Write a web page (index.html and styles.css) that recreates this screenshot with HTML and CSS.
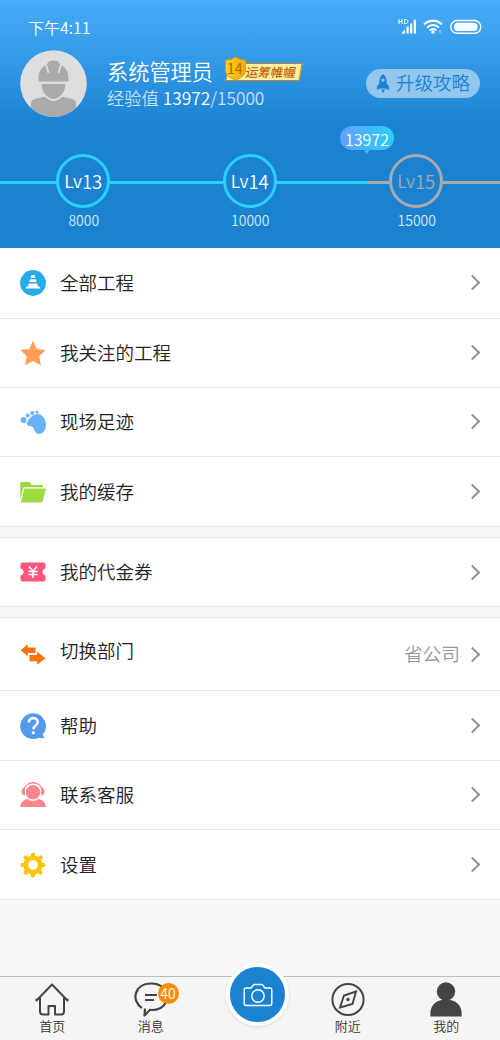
FILE: index.html
```html
<!DOCTYPE html>
<html lang="zh-CN">
<head>
<meta charset="utf-8">
<title>我的</title>
<link rel="stylesheet" href="styles.css">
</head>
<body>
<div class="app">
  <header class="hero">
    <div class="status">
      <span class="time">下午4:11</span>
      <svg class="status-icons" width="86" height="18" viewBox="0 0 86 18" fill="none" stroke="#fff">
        <path d="M1 1v5M4 1v5M1 3.500h3M6.500 1.500h1.300c2.700 0 2.700 4 0 4h-1.300z" stroke-width="1"/>
        <path d="M3 15.500h4v-4zM8.500 8.500h2.200v7H8.500zM12 5.500h2.200v10H12zM15.700 1.700h2.300v13.800h-2.300z" fill="#fff" stroke="none"/>
        <path d="M26 6.300q9-7.500 18 0M29 9.500q6-5 12 0M31.600 12.500q3.400-2.800 6.800 0" stroke-width="2.100"/>
        <circle cx="35" cy="14.200" r="1.600" fill="#fff" stroke="none"/>
        <path d="M42 12v3.500" opacity=".6"/>
        <rect x="52.800" y="2.500" width="30" height="12.800" rx="6.400" stroke-width="1.400"/>
        <rect x="56" y="4.800" width="23.500" height="8.200" rx="3.500" fill="#fff" stroke="none"/>
      </svg>
    </div>
    <div class="profile">
      <svg class="avatar" width="67" height="67" viewBox="0 0 67 67">
        <defs><clipPath id="face"><circle cx="33.500" cy="33.500" r="33.300"/></clipPath></defs>
        <circle cx="33.500" cy="33.500" r="33.300" fill="#dedede"/>
        <g fill="#aaa" clip-path="url(#face)">
          <path d="M11 67V53q0-3 4-4l10-2.500q8 8 17 0l10 2.500q4 1 4 4v14z"/>
          <path d="M20.500 33h26c0 8-4 13-8 15.500q-5 3-10 0c-4-2.500-8-7.500-8-15.500z" stroke="#dedede" stroke-width="2"/>
          <path d="M18.500 31.500V28c0-7 3.500-11.500 8.500-13.500q1-4 6.500-4t6.500 4c5 2 8.500 6.500 8.500 13.500v3.500z"/>
          <path d="M26 14.500l2.500 8.500M41 14.500L38.500 23" stroke="#dedede" stroke-width="1.800"/>
        </g>
      </svg>
      <div class="identity">
        <div class="name-line"><span class="name">系统管理员</span>
          <span class="medal">
            <svg width="23" height="25" viewBox="0 0 23 25"><defs><linearGradient id="gold"><stop stop-color="#ffd11e"/><stop offset="1" stop-color="#f4a900"/></linearGradient></defs><path d="M11.500 1q4 3.500 10 3v11q-1 6-10 9-9-3-10-9V4q6 .5 10-3z" fill="url(#gold)" stroke="#e19b0a"/></svg>
            <b class="rank">14</b><span class="title"><i>运筹帷幄</i></span>
          </span>
        </div>
        <div class="exp">经验值 <strong>13972</strong>/15000</div>
      </div>
      <div class="guide">
        <svg width="14" height="21" viewBox="0 0 14 21" fill="#1b82d2"><path fill-rule="evenodd" d="M7 1c3 2.300 4 6 3.700 9.500l2.300 3V17l-3-1.500H4L1 17v-3.500l2.300-3C3 7 4 3.300 7 1zm0 4.500a1.700 1.700 0 1 0 0 3.400 1.700 1.700 0 0 0 0-3.400z"/><path d="M5 16.500h4l-2 3.700z"/></svg>
        <span>升级攻略</span>
      </div>
    </div>
    <div class="levels">
      <div class="track"></div>
      <div class="level"><div class="ring">Lv<b>13</b></div><span>8000</span></div>
      <div class="level"><div class="ring">Lv<b>14</b></div><span>10000</span></div>
      <div class="level locked"><div class="ring">Lv<b>15</b></div><span>15000</span></div>
      <div class="bubble">13972</div>
    </div>
  </header>

  <main>
    <section class="group">
      <div class="row">
        <svg class="icon" viewBox="0 0 26 26"><circle cx="13" cy="13" r="12.900" fill="#27abeb"/><path d="M11.500 5h3l.9 3h-4.800zM10.200 9.300h5.600l.9 2.700H9.300zM8.900 13.500h8.200l1.100 3.200h1.900v1.800H5.900v-1.800h1.900z" fill="#fff"/></svg>
        <span class="label">全部工程</span><i class="arrow"></i>
      </div>
      <div class="row">
        <svg class="icon" viewBox="0 0 26 26"><path d="M13 .8l3.800 8.200 8.900 1.100-6.500 6.200 1.700 8.900-7.900-4.300-7.900 4.300 1.700-8.900-6.500-6.200L9.200 9z" fill="#ff9f55"/></svg>
        <span class="label">我关注的工程</span><i class="arrow"></i>
      </div>
      <div class="row">
        <svg class="icon" viewBox="0 0 26 26" fill="#68b2fa"><circle cx="3.500" cy="11" r="3"/><circle cx="7.700" cy="6.500" r="2"/><circle cx="12.200" cy="4" r="2"/><circle cx="17" cy="3" r="1.500"/><path d="M7 14c1-4 6-9 11-9 5 .5 8 6 8 11 0 6-4 9-7 9-5 0-4-6-7-7.500-2-1-5.500 0-5-3.500z"/></svg>
        <span class="label">现场足迹</span><i class="arrow"></i>
      </div>
      <div class="row">
        <svg class="icon" viewBox="0 0 26 26" fill="#9bdd40"><path d="M.2 21V4q0-1 1-1h8q1 0 1.400 1l1 2H22q1 0 1 1v1.200H4.500q-1 0-1.300 1z"/><path d="M5 9.600h20q1 0 .8 1l-3.300 12q-.3 1-1.300 1H2q-1.200 0-.9-1L4 10.500q.2-.9 1-.9z"/></svg>
        <span class="label">我的缓存</span><i class="arrow"></i>
      </div>
    </section>
    <section class="group">
      <div class="row">
        <svg class="icon" viewBox="0 0 26 26"><path d="M2.500 3.500h21q2 0 2 2v4q-3 .5-3 3.500t3 3.500v4q0 2-2 2h-21q-2 0-2-2v-4q3-.5 3-3.500t-3-3.500v-4q0-2 2-2z" fill="#ff567e"/><path d="M9 7.500l4 4.500 4-4.500M8.500 12.500h9M8.500 15.500h9M13 12v7" fill="none" stroke="#fff" stroke-width="1.500"/></svg>
        <span class="label">我的代金券</span><i class="arrow"></i>
      </div>
    </section>
    <section class="group">
      <div class="row switch">
        <svg class="icon" viewBox="0 0 26 26" fill="#ff730f"><path d="M.7 9.300L7.700 3.300v3.200H15.500v5.500H7.700v3.300zM9.500 14H17v-3.300l8.600 6.500-8.600 6.500v-3.500H9.500z"/></svg>
        <span class="label">切换部门</span><span class="value">省公司</span><i class="arrow"></i>
      </div>
      <div class="row">
        <svg class="icon" viewBox="0 0 26 26"><path d="M13 .3a12.800 12.800 0 0 1 9.700 21.200q.6 2 1.800 3.800-3 .1-5-.9A12.900 12.900 0 1 1 13 .3z" fill="#5399ed"/><path d="M8.800 9.500c0-6 9.200-5.500 8.900-.3-.2 3.500-4.300 3.200-4.300 7" fill="none" stroke="#fff" stroke-width="2.600"/><path d="M11.900 18.500h2.900v2.600h-2.900z" fill="#fff"/></svg>
        <span class="label">帮助</span><i class="arrow"></i>
      </div>
      <div class="row">
        <svg class="icon" viewBox="0 0 26 26" fill="#ff8591"><circle cx="13" cy="10.300" r="7.200"/><path d="M3.500 8.500C6-1.800 20-1.800 22.500 8.500" fill="none" stroke="#ff8591" stroke-width="1.400"/><path d="M5 5.500v8q-3.500-.5-3.500-4T5 5.500zM21 5.500v8q3.500-.5 3.500-4t-3.500-4zM.2 25q0-6 7-8.300 5.800 4.600 11.600 0 7 2.300 7 8.300z"/></svg>
        <span class="label">联系客服</span><i class="arrow"></i>
      </div>
      <div class="row">
        <svg class="icon" viewBox="0 0 26 26"><circle cx="13" cy="13" r="7.200" fill="none" stroke="#fdc508" stroke-width="4.800"/><g stroke="#fdc508" stroke-width="4.200" stroke-linecap="round"><path d="M13 2.500V4M13 22v1.500M2.500 13H4M22 13h1.500M5.500 5.500l1 1M19.500 19.500l1 1M5.500 20.500l1-1M19.500 6.500l1-1"/></g></svg>
        <span class="label">设置</span><i class="arrow"></i>
      </div>
    </section>
  </main>

  <nav class="tabs">
    <div class="tab">
      <svg width="36" height="36" viewBox="0 0 36 36" fill="none" stroke="#444" stroke-width="2" stroke-linejoin="round" stroke-linecap="round"><path d="M2.500 19.500L18 3.500l15.500 16M6 17v13.500q0 3 3 3h5.500V25h6.500v8.500h6q3 0 3-3V17M6 16l-3.500 3.500v-1M30 16l3.500 3.500v-1"/></svg>
      <span>首页</span>
    </div>
    <div class="tab">
      <svg width="36" height="36" viewBox="0 0 36 36" fill="none" stroke="#444" stroke-width="2.200" stroke-linejoin="round"><path d="M8.800 27C-2 20 1 2.500 18 2.500c22 0 20 26.500 2 26.500q-2 0-3-.3l-5.500 5.800.5-7M12 14h12M12 19h9"/></svg>
      <em class="badge">40</em>
      <span>消息</span>
    </div>
    <div class="tab camera">
      <div class="shutter"><svg width="30" height="24" viewBox="0 0 30 24" fill="none" stroke="#fff" stroke-width="1.400" stroke-linejoin="round"><path d="M3 5h5l2-2.700q.5-.8 1.500-.8h7q1 0 1.500.8L22 5h5q1.800 0 1.800 1.800v14Q28.800 22.500 27 22.500H3q-1.800 0-1.800-1.700v-14Q1.200 5 3 5z"/><circle cx="15" cy="13" r="6.200"/></svg></div>
    </div>
    <div class="tab">
      <svg width="36" height="36" viewBox="0 0 36 36" fill="none" stroke="#444" stroke-width="2"><circle cx="18" cy="18.500" r="15.600"/><path d="M26 10.500L22.500 23 10 26.500l4-12z" stroke-width="1.900"/><circle cx="18" cy="18.500" r="1.700" fill="#444" stroke="none"/></svg>
      <span>附近</span>
    </div>
    <div class="tab">
      <svg width="36" height="36" viewBox="0 0 36 36" fill="#444"><circle cx="18" cy="10.500" r="9.200"/><path d="M2.400 35.500V31C3 23.500 9 18.500 18 18.500S33 23.500 33.600 31v4.500z"/></svg>
      <span>我的</span>
    </div>
  </nav>
</div>
</body>
</html>
```
FILE: styles.css
```css
* { box-sizing: border-box; }
body {
  margin: 0;
  font-family: "Noto Sans CJK SC", sans-serif;
  font-weight: 350;
  background: #f7f7f7;
}
svg { display: block; flex: none; }
i, em { font-style: normal; }
.app { width: 500px; height: 1040px; display: flex; flex-direction: column; overflow: hidden; }

.hero {
  height: 248px;
  flex: none;
  color: #fff;
  background: linear-gradient(#47adfa 0, #1b82d2 128px);
}
.status { height: 49px; padding: 18px 16px 0 28px; display: flex; justify-content: space-between; }
.time { font-size: 16px; line-height: 19px; }
.profile { height: 68px; padding: 0 20px; display: flex; align-items: center; }
.identity { margin-left: 20px; flex: 1; }
.name-line { height: 28px; display: flex; align-items: center; }
.name { font-size: 21.200px; line-height: 28px; white-space: nowrap; }
.medal { position: relative; margin: -4px 0 0 11px; display: flex; align-items: center; }
.medal svg { z-index: 1; }
.rank { position: absolute; z-index: 2; left: 3px; top: 3px; font-size: 14px; line-height: 18px; font-weight: 400; color: #b36500; }
.title {
  width: 74px; height: 18px; margin: 6px 0 0 -20px; padding-left: 18px;
  background: #fff0a0; border: 1px solid #b98231; transform: skewX(-10deg);
  color: #c45f0c; font-size: 12.500px; line-height: 16px; font-weight: 500; white-space: nowrap;
}
.exp { font-size: 17.300px; line-height: 25px; color: #c8e0f5; white-space: nowrap; }
.exp strong { color: #fff; font-weight: 350; }
.guide {
  width: 114px; height: 29px; flex: none; padding-left: 10px; border-radius: 15px;
  background: #92c6ed; color: #1b82d2;
  display: flex; align-items: center; gap: 6px; font-size: 18.500px; line-height: 27px;
}
.guide span { transform: translateY(-1px); }

.levels { position: relative; height: 131px; padding: 37px 0 0; display: grid; grid-template-columns: repeat(3, 166.500px); }
.track { position: absolute; left: 0; right: 0; top: 63.500px; height: 3px; background: linear-gradient(90deg, #2ad0f9 367px, #a9a9a9 367px); }
.level { position: relative; display: flex; flex-direction: column; align-items: center; font-size: 14px; line-height: 20px; color: #d5e8f8; }
.level > span { margin: 2px 0 0 1px; }
.ring {
  width: 54px; height: 54px; border: 3px solid #2ad0f9; border-radius: 50%; background: #1b82d2;
  display: flex; align-items: center; justify-content: center; font-size: 17.500px; color: #fff;
}
.ring b { font-weight: 350; font-size: 18.500px; }
.locked .ring { border-color: #a9a9a9; color: #a9a9a9; }
.bubble {
  position: absolute; left: 340px; top: 9px; width: 54px; height: 24px; border-radius: 12px;
  background: linear-gradient(90deg, #659eff, #27d0f8); text-align: center; font-size: 16px; line-height: 26px;
}
.bubble::after { content: ""; position: absolute; left: 24px; top: 23px; border: 3px solid transparent; border-top: 5px solid #45bcfb; border-bottom: 0; }

main { flex: 1; display: flex; flex-direction: column; gap: 10px; }
.group { background: #fff; border-bottom: 1px solid #e8e8e8; }
.group + .group { border-top: 1px solid #ececec; }
.row { height: 69.300px; padding: 0 19px 0 20px; display: flex; align-items: center; border-bottom: 1px solid #e9e9e9; }
.group .row:last-child { border-bottom: 0; }
.group:first-child .row:first-child { height: 70.500px; }
.group:nth-child(2) .row { height: 68px; }
.row.switch { height: 73px; }
.icon { width: 26px; height: 26px; }
.label { margin-left: 14px; flex: 1; font-size: 18.500px; line-height: 26px; color: #222; transform: translateY(-1.500px); }
.switch .label { transform: translateY(-4px); }
.value { font-size: 18.700px; line-height: 26px; color: #999; margin-right: 10px; transform: translateY(-1px); }
.arrow { width: 11px; height: 11px; border: solid #939393; border-width: 2px 2px 0 0; transform: translate(-3px, 0) rotate(45deg); }

.tabs { height: 64px; flex: none; padding: 4px 3px 0; border-top: 1px solid #bdbdbd; background: #f5f5f5; display: grid; grid-template-columns: repeat(5, 98.500px); }
.tab { position: relative; display: flex; flex-direction: column; align-items: center; font-size: 13px; line-height: 18px; color: #333; }
.badge { position: absolute; left: 56px; top: 2px; width: 21px; height: 21px; border-radius: 50%; background: #ff8b00; color: #fff; font-size: 14px; line-height: 21px; text-align: center; }
.shutter {
  width: 63px; height: 63px; margin: -18px 0 0 17px; flex: none; border: 4.500px solid #fff; border-radius: 50%;
  background: #1b82d2; box-shadow: 0 1px 3px rgba(0, 0, 0, .12); display: flex; align-items: center; justify-content: center;
}
```
